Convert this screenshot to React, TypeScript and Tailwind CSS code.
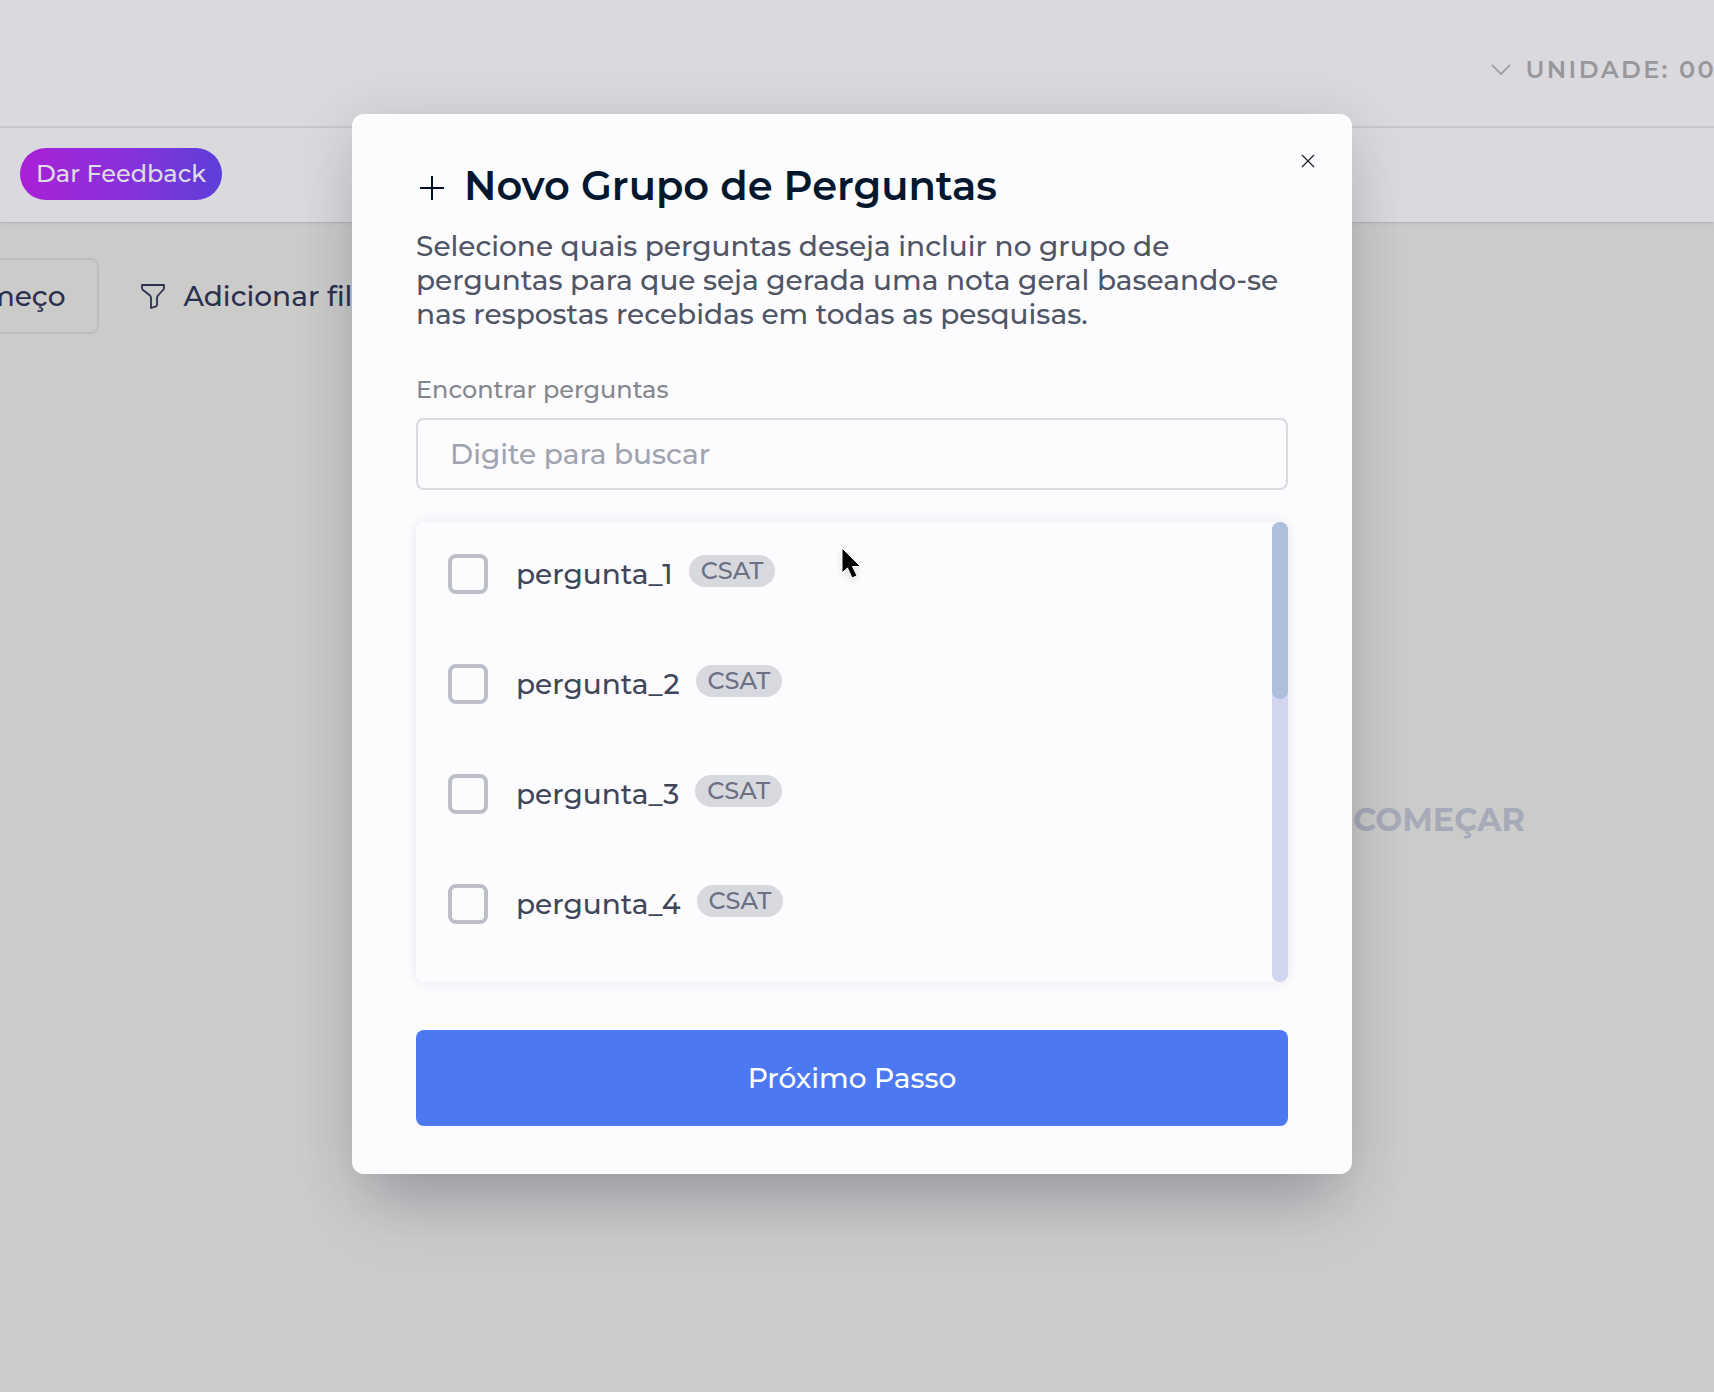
import { useState } from 'react';

const questions = [
    { id: 'pergunta_1', type: 'CSAT' },
    { id: 'pergunta_2', type: 'CSAT' },
    { id: 'pergunta_3', type: 'CSAT' },
    { id: 'pergunta_4', type: 'CSAT' },
];

function TopBar() {
    return (
        <header className="bg-[#d9d9de] shadow">
            <div className="flex items-center justify-end h-32 overflow-hidden border-b-2 border-[#c6c6cc]">
                <button type="button" className="flex items-center shrink-0 gap-3.5 -mr-0.5 mt-3.5 text-[24px] font-semibold tracking-widest text-[#98989c] whitespace-nowrap">
                    <svg className="w-5 h-3" viewBox="0 0 20 12" fill="none" stroke="currentColor" strokeWidth="1.600">
                        <path d="M1 1l9 9 9-9" />
                    </svg>
                    UNIDADE: 00
                </button>
            </div>
            <div className="flex items-start h-[94px] px-5 pt-5">
                <button type="button" className="h-[52px] px-4 text-[24px] font-medium text-[#dddde4] rounded-full bg-linear-to-r from-[#a91fd6] via-[#8a2fdc] to-[#5c3ed8]">
                    Dar Feedback
                </button>
            </div>
        </header>
    );
}

function Filters() {
    return (
        <div className="flex items-center gap-10 pt-9 text-[28px] font-medium text-[#2b3050]">
            <button type="button" className="h-[76px] -ml-[86px] px-8 border-2 border-[#bcbcc0] rounded-lg">
                Começo
            </button>
            <button type="button" className="flex items-center gap-4">
                <svg className="w-7 h-7" viewBox="0 0 28 28" fill="none" stroke="currentColor" strokeWidth="1.800" strokeLinejoin="round">
                    <path d="M3 3h22v3q0 1-1 2l-5 5.500q-1 1-1 2.500V23q0 1-1 1.300L12 26V16q0-1.500-1-2.500L4 8Q3 7 3 6z" />
                </svg>
                Adicionar filtro
            </button>
        </div>
    );
}

function QuestionRow({ id, type }: { id: string; type: string }) {
    const [checked, setChecked] = useState(false);

    return (
        <li className="flex items-center h-10">
            <input
                id={id}
                type="checkbox"
                checked={checked}
                onChange={() => setChecked(!checked)}
                className="w-10 h-10 bg-transparent border-4 border-[#bcbec8] rounded-lg appearance-none checked:bg-[#4a78f0]"
            />
            <label htmlFor={id} className="pl-7 text-[28px] leading-9 font-medium text-[#40465a]">{id}</label>
            <span className="flex items-center h-8 px-3 mb-1.5 ml-4 text-[24px] font-medium text-[#6c7084] bg-[#d8d9de] rounded-full">{type}</span>
        </li>
    );
}

function NewGroupModal() {
    const [search, setSearch] = useState('');

    return (
        <div role="dialog" aria-labelledby="modal-title" className="relative w-full max-w-[1000px] px-16 py-12 bg-[#fcfcfe] rounded-xl shadow-[0_50px_60px_-20px_rgba(50,50,93,0.22),0_8px_60px_rgba(0,0,0,0.13)]">
            <button type="button" aria-label="Fechar" className="absolute top-[39px] right-9 text-[#23232b]">
                <svg className="w-4 h-4" viewBox="0 0 16 16" fill="none" stroke="currentColor" strokeWidth="1.300">
                    <path d="M2 2l12 12M14 2L2 14" />
                </svg>
            </button>

            <div className="flex items-center gap-4 h-12">
                <svg className="w-8 h-8 mt-1" viewBox="0 0 32 32" fill="none" stroke="#000f24" strokeWidth="2">
                    <path d="M16 4v24M4 16h24" />
                </svg>
                <h1 id="modal-title" className="text-[40px] font-semibold text-[#03172f] whitespace-nowrap">Novo Grupo de Perguntas</h1>
            </div>
            <p className="mt-[19px] text-[28px] leading-[34px] font-medium text-[#505566]">
                Selecione quais perguntas deseja incluir no grupo de<br />
                perguntas para que seja gerada uma nota geral baseando-se<br />
                nas respostas recebidas em todas as pesquisas.
            </p>

            <label htmlFor="search" className="block mt-[43px] text-[24px] leading-8 font-medium text-[#85878f]">Encontrar perguntas</label>
            <input
                id="search"
                type="text"
                value={search}
                onChange={(e) => setSearch(e.target.value)}
                placeholder="Digite para buscar"
                className="block w-full h-18 px-8 mt-3 text-[28px] font-medium text-[#3c4258] placeholder:text-[#a0a3b0] border-2 border-[#d9d9de] rounded-lg outline-none"
            />

            <div className="flex justify-between mt-8 rounded-lg shadow-[0_0_12px_rgba(60,60,110,0.1)]">
                <ul className="flex flex-col gap-[70px] pt-8 pb-[58px] pl-8">
                    {questions.map((question) => (
                        <QuestionRow key={question.id} id={question.id} type={question.type} />
                    ))}
                </ul>
                <div className="w-4 bg-[#d2d5ee] rounded-full">
                    <div className="h-[177px] bg-[#b0bede] rounded-full" />
                </div>
            </div>

            <button type="button" className="w-full h-24 mt-12 text-[28px] font-medium text-white bg-[#4c78f2] rounded-lg">
                Próximo Passo
            </button>

            {/* mouse pointer */}
            <svg className="absolute top-[432px] left-[487px] w-8 h-10 drop-shadow-md" viewBox="0 0 32 40">
                <path d="M3 2v25l5.500-5 4.500 10 5-2.200-4.500-9.300h8z" fill="#000" stroke="#fff" strokeWidth="1" />
            </svg>
        </div>
    );
}

export default function App() {
    return (
        <div className="relative min-h-screen overflow-hidden bg-[#cbccca] font-['Montserrat',Inter,sans-serif]">
            <TopBar />
            <Filters />
            <p className="pr-[189px] mt-[462px] text-[32px] font-bold text-right text-[#a7aab8]">
                COMEÇAR
            </p>

            <div className="absolute inset-0 flex items-start justify-center pt-[114px] pr-[10px]">
                <NewGroupModal />
            </div>
        </div>
    );
}
